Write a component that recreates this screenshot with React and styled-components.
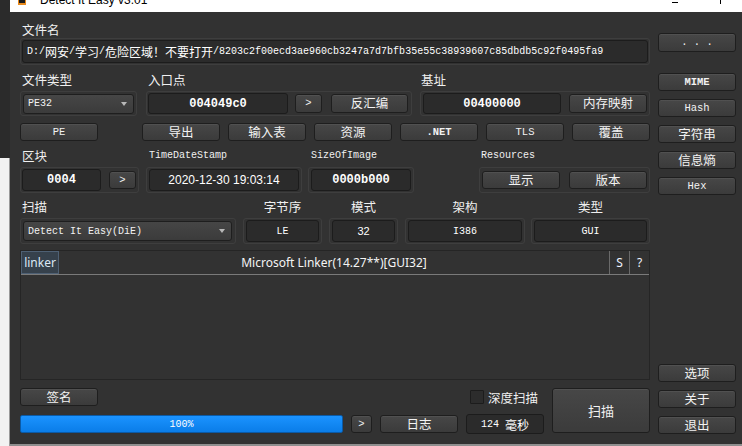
import React from "react";
import styled, { createGlobalStyle } from "styled-components";

const Global = createGlobalStyle`
  html, body { margin: 0; padding: 0; width: 742px; height: 446px; overflow: hidden; background: #f0f0f0; }
  body { font-family: "Noto Sans CJK SC", "Noto Sans", sans-serif; }
  * { box-sizing: border-box; }
`;

const MONO = `"Liberation Mono", "Noto Sans CJK SC", monospace`;
const CJK = `"Noto Sans CJK SC", "Noto Sans", sans-serif`;

const Screen = styled.div`
  display: flex;
  width: 742px;
  height: 446px;
`;

const Desktop = styled.div`
  width: 10px;
  flex: none;
  display: flex;
  flex-direction: column;
`;
const DesktopDark = styled.div`
  height: 158px;
  background: #2b2b2b;
`;
const DesktopLight = styled.div`
  flex: 1;
  background: #f2f2f2;
  border-right: 1px solid #9a9a9a;
`;

const Window = styled.div`
  flex: 1;
  min-width: 0;
  display: flex;
  flex-direction: column;
`;

const TitleBar = styled.div`
  height: 12px;
  flex: none;
  background: #ffffff;
  display: flex;
  align-items: flex-start;
  overflow: hidden;
  padding: 0 21px 0 8px;
`;
const AppIcon = styled.svg`
  flex: none;
  width: 8px;
  height: 5px;
`;
const TitleText = styled.span`
  margin: -6px 0 0 14px;
  font-family: "Liberation Sans", sans-serif;
  font-size: 12px;
  line-height: 12px;
  color: #000;
  white-space: nowrap;
`;
const Spacer = styled.div`
  flex: 1;
`;
const MinGlyph = styled.div`
  width: 6px;
  height: 1px;
  margin-top: 2px;
  background: #000;
`;
const MaxEdge = styled.div`
  width: 1px;
  height: 4px;
  margin-left: 42px;
  background: #000;
`;

const Body = styled.div`
  height: 432px;
  flex: none;
  background: #323232;
  display: flex;
  gap: 8px;
  padding: 10px 6px 10px 10px;
`;
const BottomEdge = styled.div`
  flex: 1;
  background: #8f8f8f;
`;

const Main = styled.div`
  width: 630px;
  flex: none;
  display: flex;
  flex-direction: column;
`;

const Side = styled.div`
  width: 78px;
  flex: none;
  display: flex;
  flex-direction: column;
  gap: 8px;
`;

const Label = styled.div`
  height: 16px;
  line-height: 16px;
  padding-left: ${(p) => p.$pl ?? 2}px;
  text-align: ${(p) => (p.$center ? "center" : "left")};
  color: #f0f0f0;
  font-family: ${(p) => (p.$mono ? MONO : CJK)};
  font-size: ${(p) => (p.$mono ? "10px" : "12.5px")};
  white-space: nowrap;
`;

const Row = styled.div`
  display: flex;
  align-items: flex-start;
  justify-content: ${(p) => p.$justify || "flex-start"};
  margin-top: ${(p) => p.$mt || 0}px;
  gap: ${(p) => p.$gap || 0}px;
`;

const Group = styled.div`
  width: ${(p) => p.$w}px;
  flex: none;
  margin-left: ${(p) => (p.$ml === "auto" ? "auto" : `${p.$ml || 0}px`)};
  display: flex;
  flex-direction: column;
  gap: ${(p) => p.$gap ?? 3}px;
`;

const Frame = styled.div`
  height: ${(p) => p.$h}px;
  display: flex;
  align-items: center;
  padding: 0 ${(p) => p.$pad ?? 1}px;
  border: 1px solid #3e3e3e;
  border-radius: 3px;
`;

const Field = styled.div`
  ${(p) => (p.$w ? `width: ${p.$w}px; flex: none;` : "flex: 1;")}
  height: ${(p) => p.$h || 21}px;
  display: flex;
  align-items: center;
  justify-content: ${(p) => (p.$left ? "flex-start" : "center")};
  padding: 0 4px;
  background: #2b2b2b;
  border: 1px solid #1c1c1c;
  border-radius: 3px;
  color: #ffffff;
  font-family: ${(p) => (p.$sans ? `"Liberation Sans", sans-serif` : MONO)};
  font-size: ${(p) => p.$size || 10}px;
  font-weight: ${(p) => (p.$bold ? 700 : 400)};
  white-space: nowrap;
  overflow: hidden;
`;

const Cjk = styled.span`
  font-family: ${CJK};
  font-size: 12px;
`;

const Btn = styled.button`
  width: ${(p) => p.$w || 78}px;
  height: ${(p) => p.$h || 18}px;
  flex: none;
  margin: 0 0 0 ${(p) => p.$ml || 0}px;
  padding: 0;
  display: flex;
  align-items: center;
  justify-content: center;
  background: linear-gradient(#474747, #3b3b3b);
  border: 1px solid #1e1e1e;
  border-radius: 3px;
  box-shadow: inset 0 1px 0 rgba(255, 255, 255, 0.06);
  color: #f2f2f2;
  font-family: ${(p) => (p.$mono ? MONO : CJK)};
  font-size: ${(p) => (p.$mono ? "10.5px" : "12.5px")};
  font-weight: ${(p) => (p.$bold ? 700 : 400)};
  line-height: 1;
  white-space: nowrap;
`;

const Combo = styled.div`
  width: ${(p) => p.$w}px;
  height: ${(p) => p.$h}px;
  flex: none;
  display: flex;
  align-items: center;
  justify-content: space-between;
  padding: 0 6px 0 4px;
  background: linear-gradient(#464646, #3b3b3b);
  border: 1px solid #1e1e1e;
  border-radius: 3px;
  color: #f2f2f2;
  font-family: ${MONO};
  font-size: 10px;
  white-space: nowrap;
`;
const Arrow = styled.span`
  width: 0;
  height: 0;
  border-left: 3.5px solid transparent;
  border-right: 3.5px solid transparent;
  border-top: 4px solid #b8b8b8;
`;

const Table = styled.div`
  height: 130px;
  margin-top: 6px;
  display: flex;
  flex-direction: column;
  border: 1px solid #252525;
  background: #323232;
`;
const Header = styled.div`
  height: 24px;
  display: flex;
  border-bottom: 1px solid #7a7a7a;
`;
const TypeCell = styled.div`
  width: 38px;
  flex: none;
  display: flex;
  align-items: center;
  justify-content: center;
  background: #36414c;
  border: 1px solid #4e6074;
  color: #dce8f4;
  font-family: "Noto Sans", sans-serif;
  font-size: 12px;
`;
const NameCell = styled.div`
  flex: 1;
  display: flex;
  align-items: center;
  justify-content: center;
  color: #f4f4f4;
  font-family: "Noto Sans", sans-serif;
  font-size: 12px;
  white-space: nowrap;
`;
const FlagCell = styled.div`
  width: ${(p) => p.$w}px;
  flex: none;
  display: flex;
  align-items: center;
  justify-content: center;
  border-left: 1px solid #6a6a6a;
  color: #eef4ff;
  font-family: "Noto Sans", sans-serif;
  font-size: 12px;
`;

const Bottom = styled.div`
  margin-top: 8px;
  display: flex;
  gap: 8px;
`;
const BottomLeft = styled.div`
  width: 524px;
  flex: none;
  display: flex;
  flex-direction: column;
  gap: 8px;
`;
const BottomLine = styled.div`
  height: ${(p) => p.$h}px;
  display: flex;
  align-items: center;
  justify-content: ${(p) => p.$justify || "flex-start"};
  gap: ${(p) => p.$gap || 0}px;
  padding-right: ${(p) => p.$pr || 0}px;
`;
const CheckWrap = styled.label`
  display: flex;
  align-items: center;
  gap: 4px;
  color: #f0f0f0;
  font-family: ${CJK};
  font-size: 12.5px;
`;
const CheckBox = styled.span`
  width: 14px;
  height: 14px;
  background: #2c2c2c;
  border: 1px solid #1c1c1c;
  border-radius: 1px;
`;
const Progress = styled.div`
  width: 323px;
  height: 18px;
  flex: none;
  display: flex;
  align-items: center;
  justify-content: center;
  background: linear-gradient(#1b93ff, #0a7de8);
  border: 1px solid #0b5aa6;
  border-radius: 2px;
  color: #ffffff;
  font-family: ${MONO};
  font-size: 10px;
`;
const ScanBtn = styled(Btn)`
  font-size: 13px;
`;
const SideFill = styled.div`
  flex: 1;
`;

export default function App() {
  return (
    <>
      <Global />
      <Screen>
        <Desktop>
          <DesktopDark />
          <DesktopLight />
        </Desktop>
        <Window>
          <TitleBar>
            <AppIcon viewBox="0 0 8 5">
              <rect x="0" y="0" width="8" height="5" fill="#e8891c" />
              <rect x="1" y="0" width="6" height="3" fill="#1a1a1a" />
            </AppIcon>
            <TitleText>Detect It Easy v3.01</TitleText>
            <Spacer />
            <MinGlyph />
            <MaxEdge />
          </TitleBar>
          <Body>
            <Main>
              <Label>文件名</Label>
              <Frame $h={27}>
                <Field $left $h={23}>
                  D:/<Cjk>网安</Cjk>/<Cjk>学习</Cjk>/<Cjk>危险区域！不要打开</Cjk>
                  /8203c2f00ecd3ae960cb3247a7d7bfb35e55c38939607c85dbdb5c92f0495fa9
                </Field>
              </Frame>

              <Row $mt={7}>
                <Group $w={117}>
                  <Label>文件类型</Label>
                  <Frame $h={25} $pad={2}>
                    <Combo $w={111} $h={20}>
                      PE32
                      <Arrow />
                    </Combo>
                  </Frame>
                </Group>
                <Group $w={266} $ml={9}>
                  <Label>入口点</Label>
                  <Frame $h={25}>
                    <Field $w={140} $bold $size={12}>
                      004049c0
                    </Field>
                    <Btn $w={27} $h={19} $ml={7} $mono>
                      &gt;
                    </Btn>
                    <Btn $w={77} $h={19} $ml={9}>
                      反汇编
                    </Btn>
                  </Frame>
                </Group>
                <Group $w={230} $ml={8}>
                  <Label $pl={1}>基址</Label>
                  <Frame $h={25} $pad={2}>
                    <Field $w={138} $bold $size={12}>
                      00400000
                    </Field>
                    <Btn $w={78} $h={19} $ml={8}>
                      内存映射
                    </Btn>
                  </Frame>
                </Group>
              </Row>

              <Row $mt={7} $justify="space-between">
                <Btn $mono>PE</Btn>
                <Row $gap={8}>
                  <Btn>导出</Btn>
                  <Btn>输入表</Btn>
                  <Btn>资源</Btn>
                  <Btn $mono $bold>
                    .NET
                  </Btn>
                  <Btn $mono>TLS</Btn>
                  <Btn>覆盖</Btn>
                </Row>
              </Row>

              <Row $mt={7}>
                <Group $w={119}>
                  <Label>区块</Label>
                  <Frame $h={26}>
                    <Field $w={79} $h={22} $bold $size={12}>
                      0004
                    </Field>
                    <Btn $w={27} $h={18} $ml={8} $mono>
                      &gt;
                    </Btn>
                  </Frame>
                </Group>
                <Group $w={156} $ml={7}>
                  <Label $mono $pl={3}>
                    TimeDateStamp
                  </Label>
                  <Frame $h={26} $pad={2}>
                    <Field $w={150} $h={22} $sans $size={12}>
                      2020-12-30 19:03:14
                    </Field>
                  </Frame>
                </Group>
                <Group $w={106} $ml={6}>
                  <Label $mono $pl={3}>
                    SizeOfImage
                  </Label>
                  <Frame $h={26} $pad={2}>
                    <Field $w={100} $h={22} $bold $size={12}>
                      0000b000
                    </Field>
                  </Frame>
                </Group>
                <Group $w={171} $ml="auto">
                  <Label $mono>Resources</Label>
                  <Frame $h={26} $pad={2}>
                    <Btn>显示</Btn>
                    <Btn $ml={9}>版本</Btn>
                  </Frame>
                </Group>
              </Row>

              <Row $mt={6}>
                <Group $w={216}>
                  <Label>扫描</Label>
                  <Frame $h={26} $pad={2}>
                    <Combo $w={209} $h={20}>
                      Detect It Easy(DiE)
                      <Arrow />
                    </Combo>
                  </Frame>
                </Group>
                <Group $w={79} $ml={7}>
                  <Label $center $pl={0}>
                    字节序
                  </Label>
                  <Frame $h={26} $pad={2}>
                    <Field $w={73} $h={22}>
                      LE
                    </Field>
                  </Frame>
                </Group>
                <Group $w={69} $ml={7}>
                  <Label $center $pl={0}>
                    模式
                  </Label>
                  <Frame $h={26} $pad={2}>
                    <Field $w={63} $h={22} $sans $size={11}>
                      32
                    </Field>
                  </Frame>
                </Group>
                <Group $w={120} $ml={7}>
                  <Label $center $pl={0}>
                    架构
                  </Label>
                  <Frame $h={26} $pad={2}>
                    <Field $w={114} $h={22}>
                      I386
                    </Field>
                  </Frame>
                </Group>
                <Group $w={119} $ml={6}>
                  <Label $center $pl={0}>
                    类型
                  </Label>
                  <Frame $h={26} $pad={2}>
                    <Field $w={113} $h={22}>
                      GUI
                    </Field>
                  </Frame>
                </Group>
              </Row>

              <Table>
                <Header>
                  <TypeCell>linker</TypeCell>
                  <NameCell>Microsoft Linker(14.27**)[GUI32]</NameCell>
                  <FlagCell $w={20}>S</FlagCell>
                  <FlagCell $w={20}>?</FlagCell>
                </Header>
              </Table>

              <Bottom>
                <BottomLeft>
                  <BottomLine $h={18} $justify="space-between" $pr={6}>
                    <Btn>签名</Btn>
                    <CheckWrap>
                      <CheckBox />
                      深度扫描
                    </CheckWrap>
                  </BottomLine>
                  <BottomLine $h={20} $gap={8}>
                    <Progress>100%</Progress>
                    <Btn $w={21} $mono>
                      &gt;
                    </Btn>
                    <Btn>日志</Btn>
                    <Field $w={78} $h={20}>
                      124&nbsp;<Cjk>毫秒</Cjk>
                    </Field>
                  </BottomLine>
                </BottomLeft>
                <ScanBtn $w={98} $h={45}>
                  扫描
                </ScanBtn>
              </Bottom>
            </Main>

            <Side>
              <Btn $h={19} $ml={0} $mono style={{ marginTop: 11, marginBottom: 13 }}>
                . . .
              </Btn>
              <Btn $mono $bold>
                MIME
              </Btn>
              <Btn $mono>Hash</Btn>
              <Btn>字符串</Btn>
              <Btn>信息熵</Btn>
              <Btn $mono>Hex</Btn>
              <SideFill />
              <Btn>选项</Btn>
              <Btn>关于</Btn>
              <Btn>退出</Btn>
            </Side>
          </Body>
          <BottomEdge />
        </Window>
      </Screen>
    </>
  );
}
